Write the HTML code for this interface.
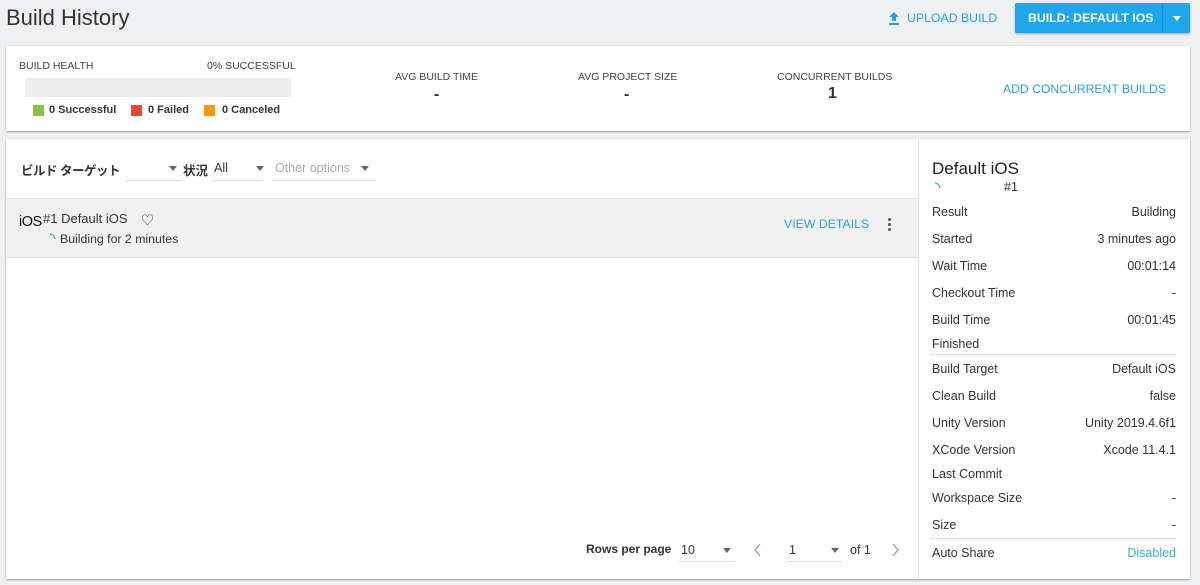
<!DOCTYPE html>
<html><head><meta charset="utf-8"><style>
*{margin:0;padding:0;box-sizing:border-box}
body{width:1200px;height:585px;background:#eff0f2;font-family:"Liberation Sans","Noto Sans CJK JP",sans-serif;color:#333;position:relative;overflow:hidden}
.a{position:absolute;white-space:nowrap}
.card{position:absolute;background:#fff;box-shadow:0 1px 2px rgba(0,0,0,.35)}
.lab{font-size:10.5px;color:#444}
.blue{color:#2d9fd8}
.k{font-size:12.5px;color:#333}
.v{font-size:12.5px;color:#333;right:24px}
.tri{display:inline-block;width:0;height:0;border-left:4px solid transparent;border-right:4px solid transparent;border-top:5px solid #666}
.ul{position:absolute;height:1px;background:#ddd}
</style></head><body>
<div class="a" style="left:6px;top:5px;font-size:22px;color:#333">Build History</div>
<svg class="a" style="left:887px;top:11px" width="14" height="14" viewBox="0 0 14 14"><path d="M7 1L2 6h3v4h4V6h3z M2 12h10v2H2z" fill="#2d9fd8"/></svg>
<div class="a blue" style="left:907px;top:11px;font-size:12.3px">UPLOAD BUILD</div>
<div class="a" style="left:1015px;top:3px;width:175px;height:30px;background:#1ea7ea;border-radius:2px;box-shadow:0 1px 2px rgba(0,0,0,.3)">
<div class="a" style="left:13px;top:8px;color:#fff;font-size:12.3px;font-weight:bold">BUILD: DEFAULT IOS</div>
<div class="a" style="left:147px;top:0;width:1px;height:30px;background:#1590cc"></div>
<div class="a" style="left:158px;top:13px;border-left:4px solid transparent;border-right:4px solid transparent;border-top:5px solid #fff"></div>
</div>

<div class="card" style="left:6px;top:46px;width:1184px;height:85px">
<div class="a lab" style="left:13px;top:14px">BUILD HEALTH</div>
<div class="a lab" style="left:201px;top:14px">0% SUCCESSFUL</div>
<div class="a" style="left:19px;top:32px;width:266px;height:19px;background:#eeeeee"></div>
<div class="a" style="left:27px;top:59px;width:11px;height:11px;background:#8bc34a"></div>
<div class="a" style="left:43px;top:58px;font-size:11px;font-weight:bold;color:#333">0 Successful</div>
<div class="a" style="left:125px;top:59px;width:11px;height:11px;background:#f44336"></div>
<div class="a" style="left:142px;top:58px;font-size:11px;font-weight:bold;color:#333">0 Failed</div>
<div class="a" style="left:198px;top:59px;width:11px;height:11px;background:#ff9800"></div>
<div class="a" style="left:216px;top:58px;font-size:11px;font-weight:bold;color:#333">0 Canceled</div>
<div class="a lab" style="left:389px;top:25px">AVG BUILD TIME</div>
<div class="a" style="left:428px;top:40px;font-size:16px;font-weight:bold">-</div>
<div class="a lab" style="left:572px;top:25px">AVG PROJECT SIZE</div>
<div class="a" style="left:618px;top:40px;font-size:16px;font-weight:bold">-</div>
<div class="a lab" style="left:771px;top:25px">CONCURRENT BUILDS</div>
<div class="a" style="left:822px;top:39px;font-size:16px;font-weight:bold">1</div>
<div class="a blue" style="left:997px;top:36px;font-size:12.2px">ADD CONCURRENT BUILDS</div>
</div>

<div class="card" style="left:6px;top:139px;width:1184px;height:440px">
<div class="a" style="left:15px;top:21px;font-size:12.5px;font-weight:bold;color:#333;letter-spacing:-0.5px">ビルド ターゲット</div>
<div class="ul" style="left:119px;top:41px;width:56px"></div><div class="a tri" style="left:163px;top:27px"></div>
<div class="a" style="left:177px;top:21px;font-size:12.5px;font-weight:bold">状況</div>
<div class="a" style="left:208px;top:22px;font-size:12.5px">All</div>
<div class="ul" style="left:206px;top:41px;width:50px"></div><div class="a tri" style="left:250px;top:27px"></div>
<div class="a" style="left:269px;top:22px;font-size:12.5px;color:#aaa">Other options</div>
<div class="ul" style="left:266px;top:41px;width:104px"></div><div class="a tri" style="left:355px;top:27px"></div>
<div class="a" style="left:0;top:59px;width:912px;height:60px;background:#f1f1f1;border-top:1px solid #e4e4e4;border-bottom:1px solid #e0e0e0"></div>
<div class="a" style="left:13px;top:75px;font-size:14.5px;color:#111;letter-spacing:-0.5px">iOS</div>
<div class="a" style="left:37px;top:72px;font-size:13px;color:#333">#1 Default iOS</div>
<div class="a" style="left:135px;top:71px;font-size:13px;color:#555">♡</div>
<svg class="a" style="left:42px;top:94px" width="10" height="10"><path d="M2 1A6 6 0 0 1 7 6" stroke="#2d9fd8" stroke-width="1.3" fill="none"/></svg>
<div class="a" style="left:54px;top:93px;font-size:12.3px">Building for 2 minutes</div>
<div class="a blue" style="left:778px;top:78px;font-size:12.3px">VIEW DETAILS</div>
<div class="a" style="left:882px;top:79px;width:3px;height:3px;background:#555;border-radius:50%;box-shadow:0 5px 0 #555,0 10px 0 #555"></div>
<div class="a" style="left:580px;top:403px;font-size:12px;font-weight:bold">Rows per page</div>
<div class="a" style="left:675px;top:404px;font-size:12.5px">10</div>
<div class="ul" style="left:673px;top:422px;width:56px"></div><div class="a tri" style="left:717px;top:409px"></div>
<svg class="a" style="left:748px;top:404px" width="8" height="14"><path d="M6 1L1 7l5 6" stroke="#999" stroke-width="1.2" fill="none"/></svg>
<div class="a" style="left:783px;top:404px;font-size:12.5px">1</div>
<div class="ul" style="left:781px;top:422px;width:56px"></div><div class="a tri" style="left:825px;top:409px"></div>
<div class="a" style="left:844px;top:404px;font-size:12.5px">of 1</div>
<svg class="a" style="left:885px;top:404px" width="8" height="14"><path d="M2 1l5 6-5 6" stroke="#999" stroke-width="1.2" fill="none"/></svg>
<div class="a" style="left:912px;top:0;width:1px;height:440px;background:#e6e6e6"></div>
</div>

<div class="a" style="left:932px;top:159px;font-size:17px;color:#222">Default iOS</div>
<svg class="a" style="left:933px;top:182px" width="10" height="10"><path d="M2 1A6 6 0 0 1 7 6" stroke="#2d9fd8" stroke-width="1.3" fill="none"/></svg>
<div class="a" style="left:1004px;top:180px;font-size:12.5px">#1</div>
<div class="a k" style="left:932px;top:205px">Result</div><div class="a v" style="top:205px">Building</div>
<div class="a k" style="left:932px;top:232px">Started</div><div class="a v" style="top:232px">3 minutes ago</div>
<div class="a k" style="left:932px;top:259px">Wait Time</div><div class="a v" style="top:259px">00:01:14</div>
<div class="a k" style="left:932px;top:286px">Checkout Time</div><div class="a v" style="top:286px">-</div>
<div class="a k" style="left:932px;top:313px">Build Time</div><div class="a v" style="top:313px">00:01:45</div>
<div class="a k" style="left:932px;top:337px">Finished</div>
<div class="a" style="left:930px;top:354px;width:246px;height:1px;background:#e0e0e0"></div>
<div class="a k" style="left:932px;top:362px">Build Target</div><div class="a v" style="top:362px">Default iOS</div>
<div class="a k" style="left:932px;top:389px">Clean Build</div><div class="a v" style="top:389px">false</div>
<div class="a k" style="left:932px;top:416px">Unity Version</div><div class="a v" style="top:416px">Unity 2019.4.6f1</div>
<div class="a k" style="left:932px;top:443px">XCode Version</div><div class="a v" style="top:443px">Xcode 11.4.1</div>
<div class="a k" style="left:932px;top:467px">Last Commit</div>
<div class="a k" style="left:932px;top:491px">Workspace Size</div><div class="a v" style="top:491px">-</div>
<div class="a k" style="left:932px;top:518px">Size</div><div class="a v" style="top:518px">-</div>
<div class="a" style="left:930px;top:538px;width:246px;height:1px;background:#e0e0e0"></div>
<div class="a k" style="left:932px;top:546px">Auto Share</div><div class="a v" style="top:546px;color:#3fb3c4">Disabled</div>
</body></html>
